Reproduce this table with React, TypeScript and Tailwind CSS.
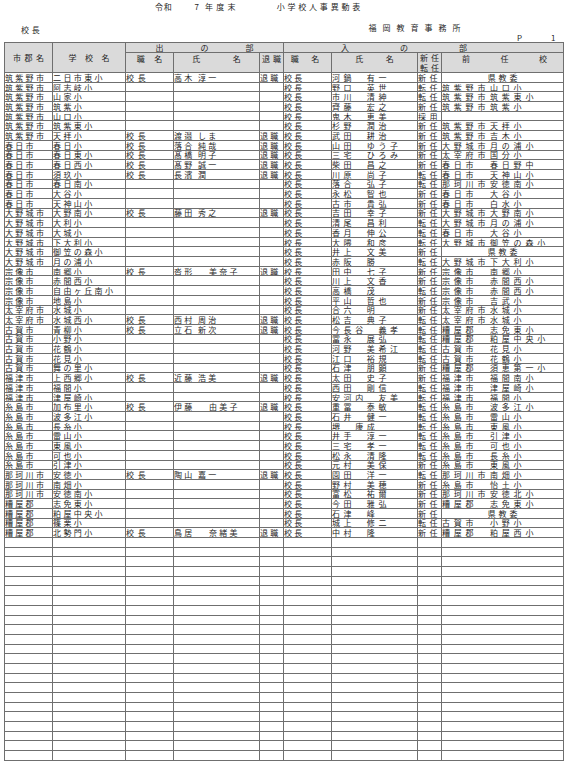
import React from "react"

type Rec = {
  city: string
  school: string
  out?: string
  inn: string
  st: string
  pc?: string
  ps?: string
}

// city|school|退職者|着任者|新任転任|前任市|前任校
const raw = `筑紫野市|二日市東小|高木 淳一|河鍋 有一|新任||県教委
筑紫野市|阿志岐小||野口 英世|転任|筑紫野市|山口小
筑紫野市|山家小||市川 清紳|転任|筑紫野市|筑紫東小
筑紫野市|筑紫小||齊藤 宏之|新任|筑紫野市|筑紫小
筑紫野市|山口小||鬼木 恵美|採用||
筑紫野市|筑紫東小||杉野 潤治|新任|筑紫野市|天拝小
筑紫野市|天拝小|渡邉 しま|武田 耕治|新任|筑紫野市|吉木小
春日市|春日小|落合 純哉|山田 ゆう子|新任|大野城市|月の浦小
春日市|春日東小|髙橋 明子|三宅 ひろみ|新任|太宰府市|国分小
春日市|春日西小|髙野 誠一|柴田 昌之|新任|春日市|春日野中
春日市|須玖小|長濱 潤|川原 尚子|転任|春日市|天神山小
春日市|春日南小||落合 弘子|転任|那珂川市|安徳南小
春日市|大谷小||永松 智也|新任|春日市|大谷小
春日市|天神山小||古市 貴弘|新任|春日市|白水小
大野城市|大野南小|藤田 秀之|吉田 幸子|新任|大野城市|大野南小
大野城市|大利小||清尾 昌利|転任|大野城市|月の浦小
大野城市|大城小||香月 伸公|転任|春日市|大谷小
大野城市|下大利小||大隈 和彦|転任|大野城市|御笠の森小
大野城市|御笠の森小||井上 文美|新任||県教委
大野城市|月の浦小||赤阪 勝|転任|大野城市|下大利小
宗像市|南郷小|沓形 美奈子|田中 七子|新任|宗像市|南郷小
宗像市|赤間西小||川上 文香|新任|宗像市|赤間西小
宗像市|自由ヶ丘南小||高橋 茂|転任|宗像市|赤間西小
宗像市|地島小||平山 哲也|新任|宗像市|吉武小
太宰府市|水城小||合六 明|新任|太宰府市|水城小
太宰府市|水城西小|西村 周治|松吉 典子|転任|太宰府市|水城小
古賀市|青柳小|立石 新次|今長谷 義孝|転任|糟屋郡|志免東小
古賀市|小野小||冨永 展弘|転任|糟屋郡|粕屋中央小
古賀市|花鶴小||河野 美希江|転任|古賀市|花見小
古賀市|花見小||江口 裕規|転任|古賀市|花鶴小
古賀市|舞の里小||石津 朋顕|新任|糟屋郡|須恵第一小
福津市|上西郷小|近藤 浩美|太田 史子|新任|福津市|福間南小
福津市|福間小||西田 剛信|転任|福津市|津屋崎小
福津市|津屋崎小||安河内 友美|転任|福津市|福間小
糸島市|加布里小|伊藤 由美子|重冨 泰敏|転任|糸島市|波多江小
糸島市|波多江小||石井 健一|転任|糸島市|雷山小
糸島市|長糸小||堺 康成|転任|糸島市|東風小
糸島市|雷山小||井手 淳一|転任|糸島市|引津小
糸島市|東風小||三宅 孝一|転任|糸島市|可也小
糸島市|可也小||松永 清隆|転任|糸島市|長糸小
糸島市|引津小||元村 美保|新任|糸島市|東風小
那珂川市|安徳小|陶山 嘉一|園田 洋一|転任|那珂川市|南畑小
那珂川市|南畑小||野村 美穂|新任|糸島市|怡土小
那珂川市|安徳南小||富松 祐爾|新任|那珂川市|安徳北小
糟屋郡|志免東小||今田 雅弘|新任|糟屋郡|志免東小
糟屋郡|粕屋中央小||石津 峰|新任||県教委
糟屋郡|篠栗小||城上 修二|転任|古賀市|小野小
糟屋郡|北勢門小|鳥居 奈緒美|中村 隆|新任|糟屋郡|粕屋西小`

const rows: Rec[] = raw.split("\n").map((l) => {
  const [city, school, out, inn, st, pc, ps] = l.split("|")
  return { city, school, out, inn, st, pc, ps }
})

const COLS = "grid grid-cols-[48px_73px_48px_86px_24px_48px_86px_24px_122px]"
const cell = "border-r border-b border-[#6f6f6f] overflow-hidden whitespace-nowrap flex items-center"

function Spread({ s, className }: { s: string; className: string }) {
  return (
    <div className={"flex " + className}>
      {s.split("").map((c, i) => (
        <span key={i}>{c}</span>
      ))}
    </div>
  )
}

function Row({ r }: { r?: Rec }) {
  const out = r?.out ? r.out.split(" ") : null
  const inn = r ? r.inn.replace(" ", "\u3000") : ""
  return (
    <div className={COLS + " h-[9.7px] leading-[9px]"}>
      <div className={cell + " tracking-[2.3px]"}>{r?.city}</div>
      <div className={cell + " tracking-[2.4px]"}>{r?.school}</div>
      <div className={cell + " tracking-[3.8px]"}>{out ? "校長" : ""}</div>
      <div className={cell + " tracking-[2.2px]"}>
        {out && (
          <>
            <span className={out[1].length > 2 ? "inline-block w-[35px]" : "inline-block w-[24px]"}>{out[0]}</span>
            <span>{out[1]}</span>
          </>
        )}
      </div>
      <div className={cell + " tracking-[2.2px]"}>{out ? "退職" : ""}</div>
      <div className={cell + " tracking-[2.2px]"}>{r ? "校長" : ""}</div>
      <div className={cell + " tracking-[3.6px]"}>{inn}</div>
      <div className={cell + " tracking-[3.4px]"}>{r?.st}</div>
      <div className={cell + " tracking-[3.8px]"}>
        {r && !r.pc && r.ps ? (
          <span className="w-full text-center tracking-[2.8px] pl-[3px]">{r.ps}</span>
        ) : (
          r && (
            <>
              <span className="inline-block w-[48px] shrink-0">{r.pc}</span>
              <span>{r.ps}</span>
            </>
          )
        )}
      </div>
    </div>
  )
}

export default function App() {
  const blanks = Array.from({ length: 23 })
  return (
    <div className="w-[567px] h-[766px] bg-white text-[#1f1f1f] text-[8px] font-['Noto_Sans_CJK_JP','Noto_Sans_CJK_SC',sans-serif] overflow-hidden">
      <div className="flex h-[14px] items-center text-[8px] pl-[155px]">
        <span className="tracking-[0.8px]">令和</span>
        <span className="ml-[22px]">7</span>
        <span className="ml-[6px] tracking-[3.2px]">年度末</span>
        <span className="ml-[38px] tracking-[2.8px]">小学校人事異動表</span>
      </div>
      <div className="flex h-[12px] mt-[8px] items-center text-[8px]">
        <span className="ml-[21px] mt-[3px] tracking-[2.8px]">校長</span>
        <span className="ml-[326px] tracking-[6px]">福岡教育事務所</span>
      </div>
      <div className="flex h-[8px] items-center text-[8px] leading-[8px]">
        <span className="ml-[517px]">P</span>
        <span className="ml-[29px]">1</span>
      </div>

      <div className="ml-[4px] w-[560px] border-l border-t border-[#6f6f6f]">
        <div className={COLS + " grid-rows-[10px_20px] bg-[#dadada] leading-[9px]"}>
          <div className={cell + " row-span-2 justify-center"}>
            <Spread s="市郡名" className="gap-[3.5px]" />
          </div>
          <div className={cell + " row-span-2 justify-center"}>
            <Spread s="学校名" className="gap-[8.5px]" />
          </div>
          <div className={cell + " col-span-3 justify-center"}>
            <Spread s="出の部" className="gap-[37px]" />
          </div>
          <div className={cell + " col-span-4 pl-[57px]"}>
            <Spread s="入の部" className="gap-[51px]" />
          </div>
          <div className={cell + " !items-start justify-center pt-[1px]"}>
            <Spread s="職名" className="gap-[9.5px]" />
          </div>
          <div className={cell + " !items-start justify-center pt-[1px]"}>
            <Spread s="氏名" className="gap-[32.5px]" />
          </div>
          <div className={cell + " !items-start justify-center pt-[1px]"}>
            <Spread s="退職" className="gap-[3px]" />
          </div>
          <div className={cell + " !items-start justify-center pt-[1px] pr-[5px]"}>
            <Spread s="職名" className="gap-[12.5px]" />
          </div>
          <div className={cell + " !items-start justify-center pt-[1px]"}>
            <Spread s="氏名" className="gap-[22.5px]" />
          </div>
          <div className={cell + " flex-col !items-center !justify-start leading-[9.5px]"}>
            <Spread s="新任" className="gap-[3px]" />
            <Spread s="転任" className="gap-[3px]" />
          </div>
          <div className={cell + " !items-start justify-center pt-[1px] pl-[4px]"}>
            <Spread s="前任校" className="gap-[30.5px]" />
          </div>
        </div>
        {rows.map((r, i) => (
          <Row key={i} r={r} />
        ))}
        {blanks.map((_, i) => (
          <Row key={"b" + i} />
        ))}
      </div>
    </div>
  )
}
